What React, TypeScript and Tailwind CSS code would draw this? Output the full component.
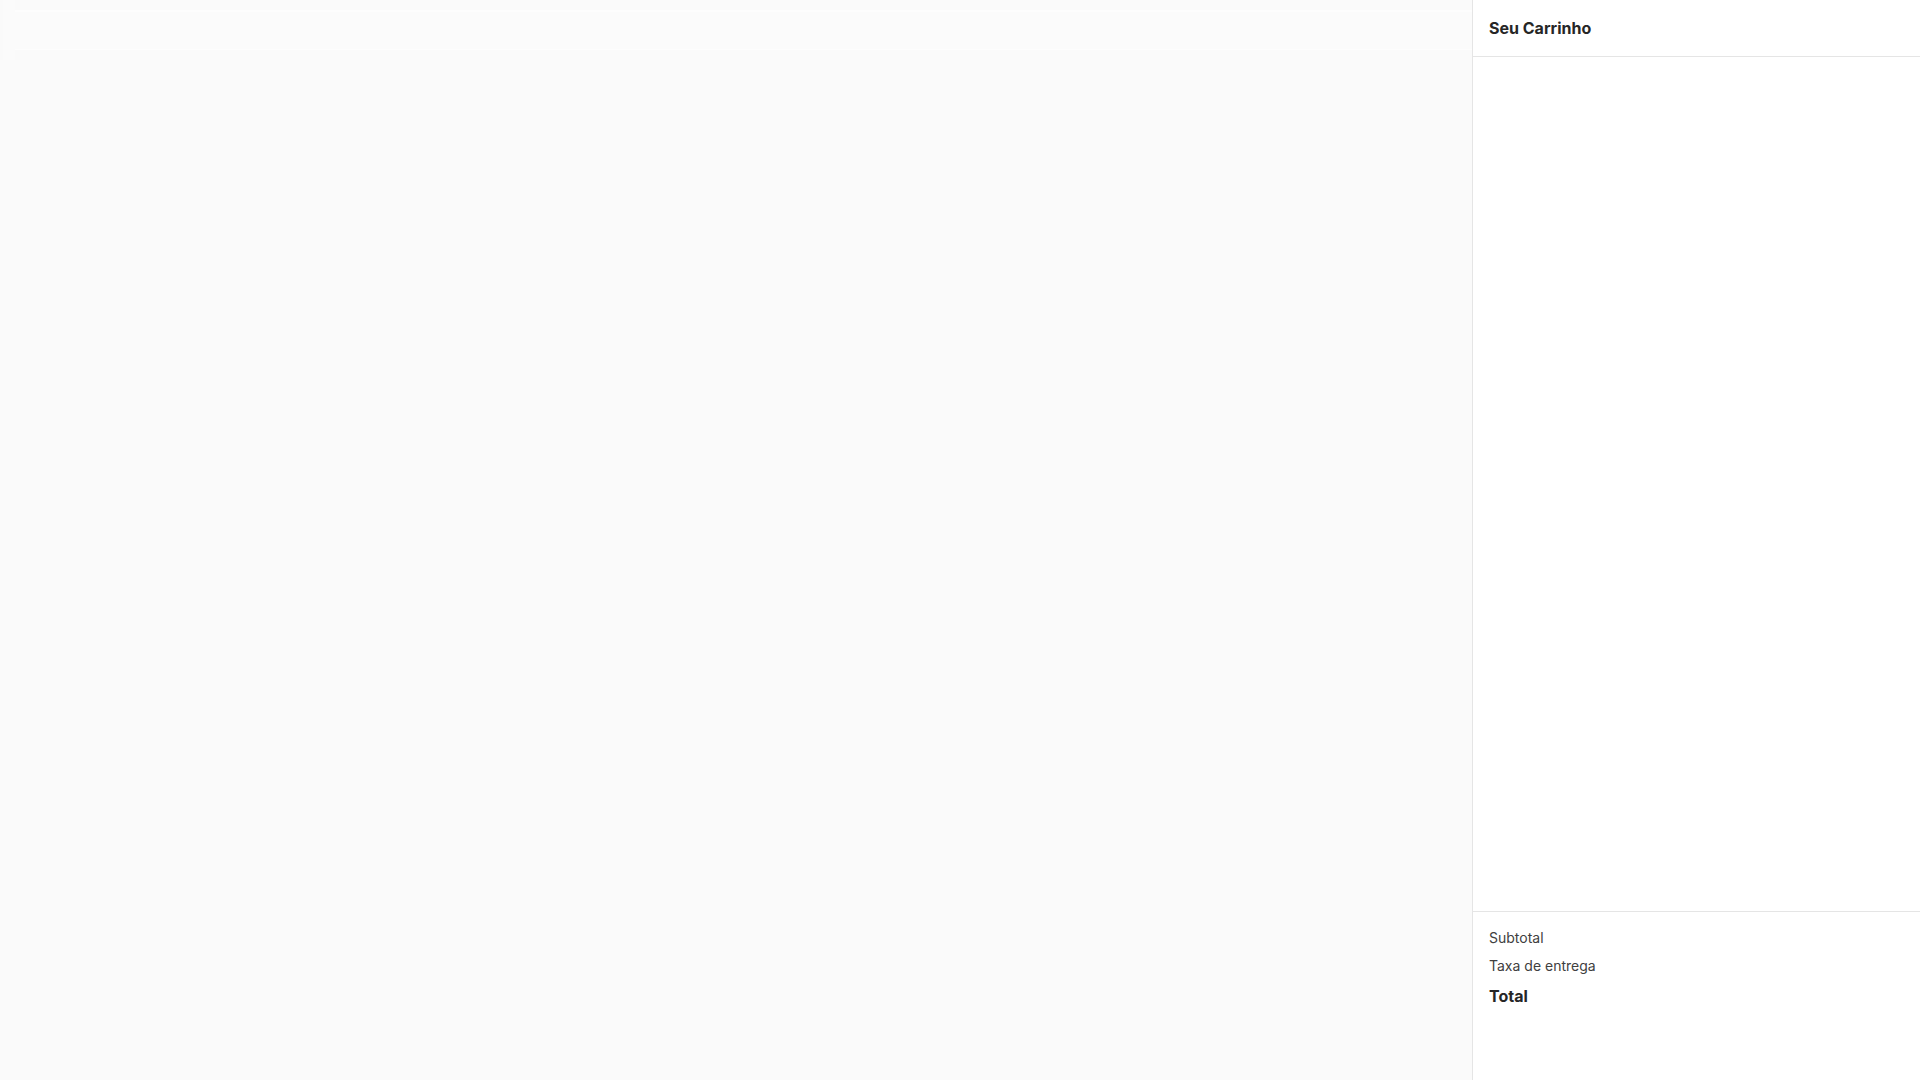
export default function App() {
  return (
    <div
      className="flex h-screen w-full bg-neutral-50"
      style={{ fontFamily: "Inter, 'Noto Sans', sans-serif" }}
    >
      {/* Main area (empty, faint header skeleton) */}
      <main className="flex flex-1 flex-col">
        <div className="flex">
          <div className="ml-[3px] h-[60px] w-[12px] bg-white/20"></div>
          <div className="mt-[10px] h-[40px] flex-1 border-t-2 border-b border-white/50 bg-white/10"></div>
        </div>
      </main>

      {/* Cart sidebar */}
      <aside className="flex h-full w-[448px] flex-col border-l border-neutral-200 bg-white">
        <div className="border-b border-neutral-200 p-4">
          <h2 className="text-base leading-6 font-bold text-neutral-800">Seu Carrinho</h2>
        </div>

        <div className="flex-1 overflow-y-auto"></div>

        <div className="border-t border-neutral-200 p-4">
          <div className="space-y-2">
            <div className="flex justify-between text-sm leading-5 text-neutral-700">
              <span>Subtotal</span>
              <span></span>
            </div>
            <div className="flex justify-between text-sm leading-5 text-neutral-700">
              <span>Taxa de entrega</span>
              <span></span>
            </div>
            <div className="flex justify-between text-base leading-6 font-bold text-neutral-800">
              <span>Total</span>
              <span></span>
            </div>
          </div>
          <div className="mt-4 h-10"></div>
        </div>
      </aside>
    </div>
  )
}
